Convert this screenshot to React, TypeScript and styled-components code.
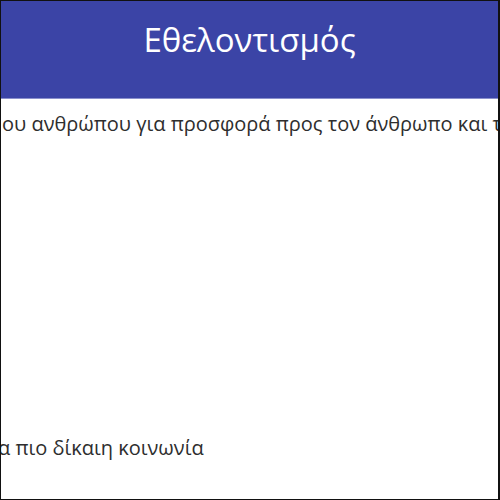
import styled, { createGlobalStyle } from 'styled-components';

const GlobalStyle = createGlobalStyle`
  html, body {
    margin: 0;
    padding: 0;
    background: #ffffff;
  }

  * {
    box-sizing: border-box;
  }
`;

const Frame = styled.div`
  width: 500px;
  height: 500px;
  display: flex;
  flex-direction: column;
  border: 1px solid #111;
  border-right-width: 2px;
  overflow: hidden;
  background: #fff;
  font-family: 'Open Sans', 'Noto Sans', sans-serif;
`;

const Header = styled.header`
  height: 98px;
  flex-shrink: 0;
  display: flex;
  align-items: center;
  justify-content: center;
  padding-bottom: 20px;
  background: #3b44a6;
  border-bottom: 1px solid #8a90cc;
`;

const Title = styled.h1`
  margin: 0;
  color: #fff;
  font-size: 33px;
  font-weight: 500;
  line-height: 40px;
`;

const Content = styled.main`
  flex: 1;
  display: flex;
  flex-direction: column;
  justify-content: space-between;
  padding: 11px 0 37px;
  overflow: hidden;
`;

const Line = styled.p<{ $shift: number }>`
  margin: 0 0 0 ${(p) => p.$shift}px;
  white-space: nowrap;
  color: #2e2e2e;
  font-size: 20px;
  font-weight: 500;
  line-height: 28px;
`;

const App = () => {
  return (
    <>
      <GlobalStyle />
      <Frame>
        <Header>
          <Title>Εθελοντισμός</Title>
        </Header>
        <Content>
          <Line $shift={1}>
            ου ανθρώπου για προσφορά προς τον άνθρωπο και την κοινωνία
          </Line>
          <Line $shift={-3}>α πιο δίκαιη κοινωνία</Line>
        </Content>
      </Frame>
    </>
  );
};

export default App;
